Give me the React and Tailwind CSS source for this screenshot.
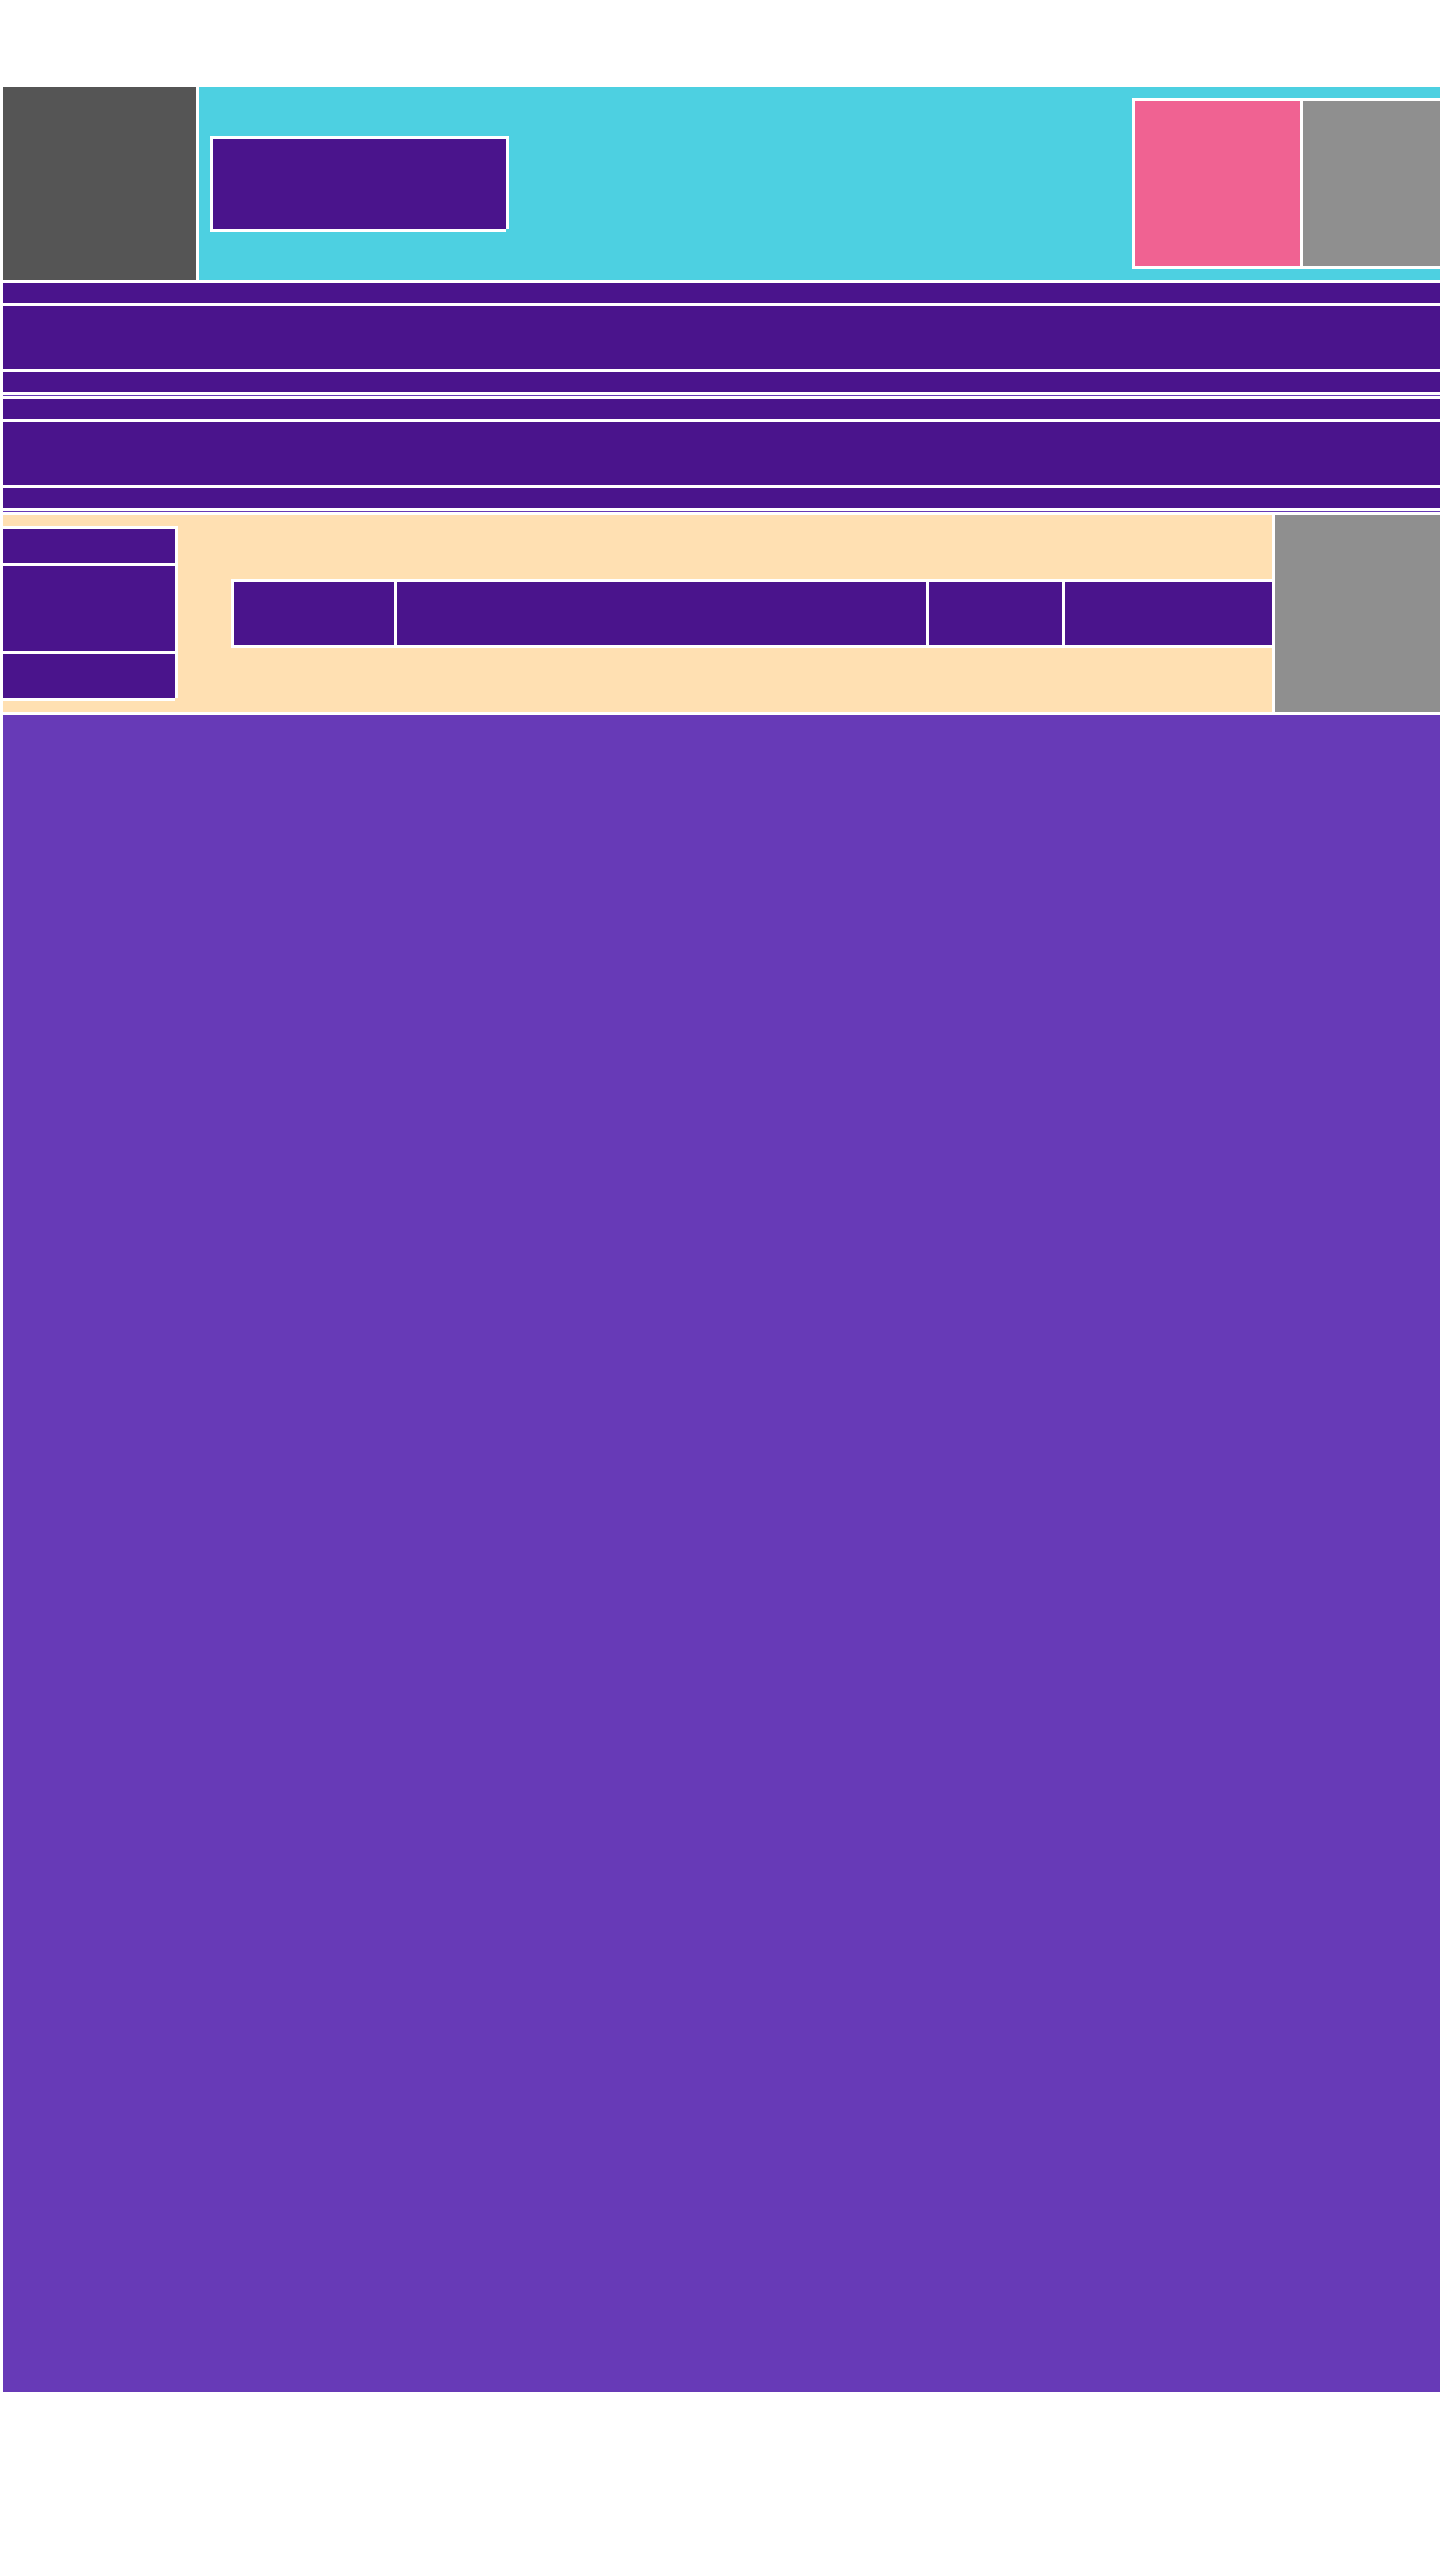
export default function App() {
  const P = "bg-[#4a148c]";
  return (
    <div className="w-[1440px] min-h-[2560px] bg-white overflow-hidden pl-[3px] pt-[87px] font-['Liberation_Sans',sans-serif]">
      <div className="flex flex-col gap-[3px] bg-white">
        {/* Header */}
        <div className="flex h-[193px] gap-[3px]">
          <div className="w-[193px] shrink-0 bg-[#555555]" />
          <div className="flex min-w-0 flex-1 items-center bg-[#4dd0e1] pl-[11px] overflow-hidden">
            <div className="relative h-[96px] w-[299px] shrink-0 border-[3px] border-white bg-[#4a148c]">
              <div className="absolute -bottom-[3px] -right-[3px] h-[3px] w-[3px] bg-[#4dd0e1]" />
            </div>
            <div className="ml-auto flex shrink-0 gap-[3px] bg-white py-[3px] pl-[3px]">
              <div className="h-[165px] w-[165px] bg-[#f06292]" />
              <div className="h-[165px] w-[137px] bg-[#8f8f8f]" />
            </div>
          </div>
        </div>

        {/* Group 1 */}
        <div className={`h-[20px] ${P}`} />
        <div className={`h-[63px] ${P}`} />
        <div className={`h-[20px] ${P}`} />
        <div className="h-[1px] bg-[#673ab7]" />

        {/* Group 2 */}
        <div className={`h-[20px] ${P}`} />
        <div className={`h-[63px] ${P}`} />
        <div className={`h-[20px] ${P}`} />
        <div className="h-[1px] bg-[#673ab7]" />

        {/* Beige section */}
        <div className="flex h-[197px] gap-[3px]">
          <div className="flex w-[1269px] shrink-0 items-center overflow-hidden bg-[#ffe0b2]">
            <div className="relative flex w-[175px] shrink-0 flex-col gap-[3px] bg-white py-[3px] pr-[3px]">
              <div className={`h-[34px] ${P}`} />
              <div className={`h-[85px] ${P}`} />
              <div className={`h-[44px] ${P}`} />
              <div className="absolute bottom-0 right-0 h-[3px] w-[3px] bg-[#ffe0b2]" />
            </div>
            <div className="ml-[53px] flex shrink-0 gap-[3px] bg-white py-[3px] pl-[3px]">
              <div className={`h-[63px] w-[160px] ${P}`} />
              <div className={`h-[63px] w-[529px] ${P}`} />
              <div className={`h-[63px] w-[133px] ${P}`} />
              <div className={`h-[63px] w-[207px] ${P}`} />
            </div>
          </div>
          <div className="min-w-0 flex-1 bg-[#8f8f8f]" />
        </div>

        {/* Big main area */}
        <div className="h-[1677px] bg-[#673ab7]" />
      </div>
    </div>
  );
}
